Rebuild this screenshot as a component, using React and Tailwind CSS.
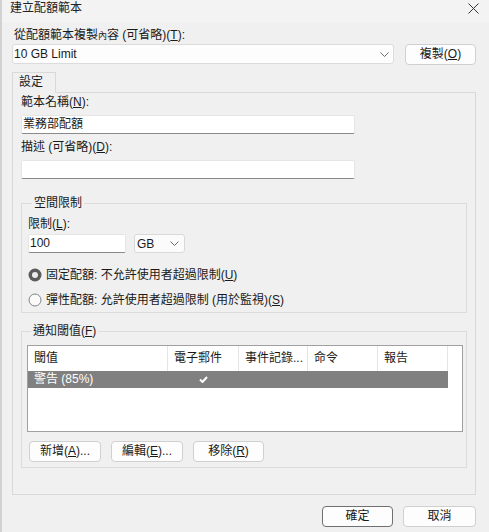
import React from 'react';

const Acc = ({ k }) => <u className="underline underline-offset-[1px]">{k}</u>;

const Chevron = ({ className = '' }) => (
  <svg width="9" height="5" viewBox="0 0 9 5" className={className}>
    <path d="M0.5 0.5 L4.5 4.5 L8.5 0.5" fill="none" stroke="#6b6b6b" strokeWidth="1" />
  </svg>
);

const Button = ({ children, w = 'w-[72px]', primary = false }) => (
  <button
    className={`${w} h-[21px] rounded-[4px] bg-[#fdfdfd] text-[12px] leading-[19px] text-[#1a1a1a] border ${
      primary ? 'border-[#707070]' : 'border-[#d0d0d0]'
    }`}
  >
    {children}
  </button>
);

const TextBox = ({ value, className = '' }) => (
  <div
    className={`h-[19px] bg-white border border-[#e5e5e5] border-b-[#8a8a8a] rounded-[2px] leading-[17px] px-[1px] ${className}`}
  >
    {value}
  </div>
);

const Radio = ({ checked, children }) => (
  <div className="flex items-center h-[16px] leading-[16px]">
    <svg width="14" height="14" viewBox="0 0 14 14" className="mr-[4px]">
      {checked ? (
        <>
          <circle cx="7" cy="7" r="6.5" fill="#5c5c5c" />
          <circle cx="7" cy="7" r="3" fill="#ececec" />
        </>
      ) : (
        <circle cx="7" cy="7" r="6" fill="#fafafa" stroke="#858585" strokeWidth="1" />
      )}
    </svg>
    <span>{children}</span>
  </div>
);

const columns = [
  { label: '閾值', w: 'w-[140px]' },
  { label: '電子郵件', w: 'w-[71px]' },
  { label: '事件記錄...', w: 'w-[69px]' },
  { label: '命令', w: 'w-[70px]' },
  { label: '報告', w: 'w-[70px]' },
];

export default function App() {
  return (
    <div className="w-[489px] h-[532px] bg-[#f0f0f0] text-[12px] text-[#1a1a1a] font-[family-name:'Liberation_Sans','Noto_Sans_CJK_TC',sans-serif] border-l-[2px] border-[#d2d2d2] flex flex-col overflow-hidden">
      {/* title bar */}
      <div className="h-[23px] bg-[#f3f3f3] flex justify-between shrink-0">
        <div className="pl-[8px] pt-[1px] leading-[14px] text-[#222]">建立配額範本</div>
        <svg width="11" height="11" viewBox="0 0 11 11" className="mt-[3px] mr-[10px]">
          <path d="M0.5 0.5 L10.5 10.5 M10.5 0.5 L0.5 10.5" stroke="#333" strokeWidth="1" />
        </svg>
      </div>

      <div className="pl-[10px] pr-[13px] flex flex-col">
        <div className="mt-[4px] h-[16px] leading-[16px] pl-[2px]">
          從配額範本複製<span className="text-[9px]">內</span>容 (可省略)(<Acc k="T" />):
        </div>
        <div className="mt-[1px] flex">
          <div className="flex-1 h-[20px] bg-[#fdfdfd] border border-[#dcdcdc] rounded-[3px] flex items-center justify-between pl-[1px] pr-[4px]">
            <span>10 GB Limit</span>
            <Chevron />
          </div>
          <div className="ml-[11px]">
            <Button w="w-[71px]">
              複製(<Acc k="O" />)
            </Button>
          </div>
        </div>

        {/* tab */}
        <div className="mt-[7px] flex">
          <div className="relative z-10 -mb-px w-[44px] h-[21px] bg-[#f0f0f0] border border-b-0 border-[#d9d9d9] pl-[6px] leading-[19px]">
            設定
          </div>
        </div>
        <div className="h-[403px] border border-[#d9d9d9] pl-[8px] pr-[8px] flex flex-col">
          <div className="mt-[1px] h-[16px] leading-[16px]">
            範本名稱(<Acc k="N" />):
          </div>
          <TextBox value="業務部配額" className="mt-[5px] w-[334px]" />
          <div className="mt-[5px] h-[16px] leading-[16px]">
            描述 (可省略)(<Acc k="D" />):
          </div>
          <TextBox value="" className="mt-[5px] w-[334px]" />

          <fieldset className="mt-[16px] w-[446px] border border-[#dcdcdc] pl-[6px] pb-[4px]">
            <legend className="ml-[4px] px-[2px] leading-[16px]">空間限制</legend>
            <div className="mt-[5px] h-[16px] leading-[16px]">
              限制(<Acc k="L" />):
            </div>
            <div className="mt-[2px] flex">
              <div className="w-[98px] h-[19px] bg-white border border-[#e5e5e5] border-b-[#8a8a8a] rounded-[2px] leading-[17px] pl-[1px]">
                100
              </div>
              <div className="ml-[8px] w-[51px] h-[19px] bg-[#fbfbfb] border border-[#d9d9d9] rounded-[3px] flex items-center justify-between pl-[2px] pr-[5px]">
                <span>GB</span>
                <Chevron />
              </div>
            </div>
            <div className="mt-[14px]">
              <Radio checked>
                固定配額: 不允許使用者超過限制(<Acc k="U" />)
              </Radio>
            </div>
            <div className="mt-[9px]">
              <Radio>
                彈性配額: 允許使用者超過限制 (用於監視)(<Acc k="S" />)
              </Radio>
            </div>
          </fieldset>

          <fieldset className="mt-[10px] w-[446px] border border-[#dcdcdc] pl-[5px] pb-[5px]">
            <legend className="ml-[4px] px-[2px] leading-[16px]">
              通知閾值(<Acc k="F" />)
            </legend>
            <div className="mt-[6px] w-[436px] h-[87px] bg-white border border-[#a0a0a0]">
              <div className="flex h-[25px]">
                {columns.map((c) => (
                  <div
                    key={c.label}
                    className={`${c.w} h-full border-r border-[#e5e5e5] pl-[6px] leading-[25px] whitespace-nowrap overflow-hidden`}
                  >
                    {c.label}
                  </div>
                ))}
              </div>
              <div className="flex w-[420px] h-[17px] bg-[#808080] text-white leading-[17px]">
                <div className="w-[140px] pl-[6px]">警告 (85%)</div>
                <div className="w-[71px] flex items-center justify-center">
                  <svg width="9" height="7" viewBox="0 0 9 7">
                    <path d="M1 3.5 L3.5 6 L8 1" fill="none" stroke="#ffffff" strokeWidth="2" />
                  </svg>
                </div>
              </div>
            </div>
            <div className="mt-[9px] ml-[2px] flex gap-[10px]">
              <Button>
                新增(<Acc k="A" />)...
              </Button>
              <Button>
                編輯(<Acc k="E" />)...
              </Button>
              <Button w="w-[71px]">
                移除(<Acc k="R" />)
              </Button>
            </div>
          </fieldset>
        </div>

        <div className="mt-[11px] flex justify-end gap-[10px]">
          <Button w="w-[71px]" primary>
            確定
          </Button>
          <Button w="w-[73px]">取消</Button>
        </div>
      </div>
    </div>
  );
}
